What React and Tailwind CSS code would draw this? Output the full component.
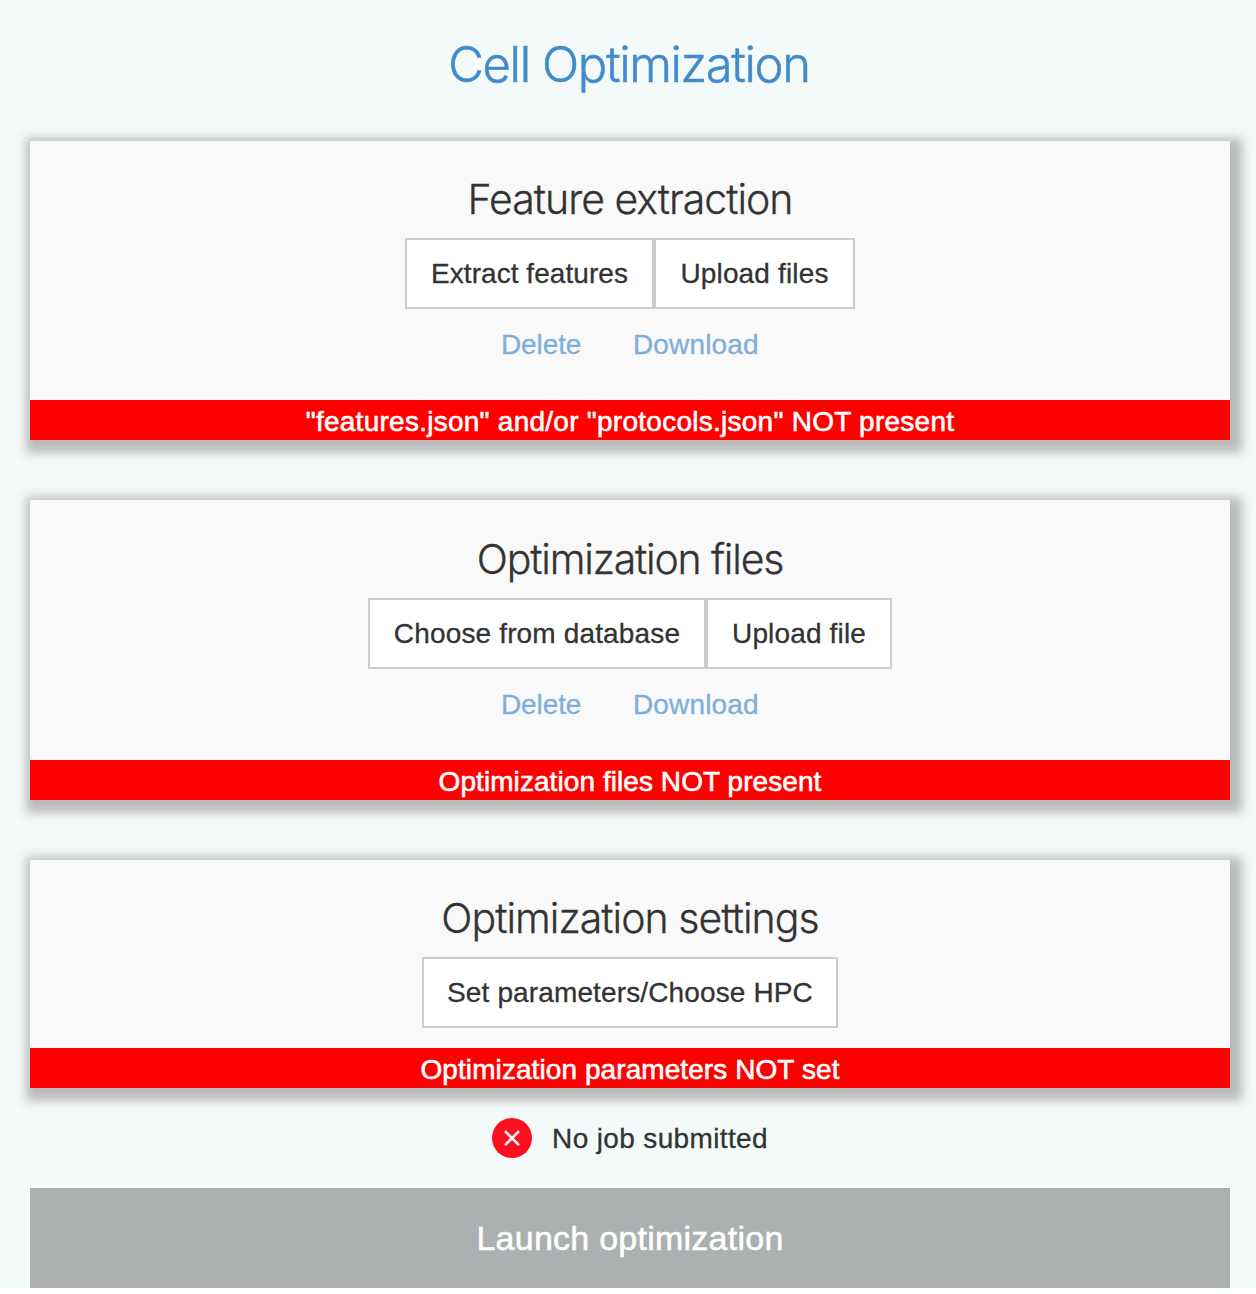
const heading = "text-center font-light whitespace-nowrap font-['Inter','Liberation_Sans',sans-serif]";

function Card({ title, titleClass, className, buttons, links, status, statusClass }) {
  return (
    <section
      className={`flex flex-col items-center bg-[#f9f9f9] shadow-[4px_5px_10px_8px_#bababa] ${className}`}
    >
      <h2 className={`${heading} h-[66px] text-[41px] leading-[54px] text-[#333] ${titleClass}`}>
        {title}
      </h2>
      <div className="flex">
        {buttons.map((b) => (
          <button
            key={b.label}
            className={`h-[71px] border-2 border-[#ccc] bg-white pt-px text-center whitespace-nowrap ${b.className}`}
          >
            {b.label}
          </button>
        ))}
      </div>
      {links && (
        <div className="mt-5 flex h-8 items-center gap-[52px] leading-8 text-[#80aedb]">
          <a className="w-20 tracking-[-0.1px]">Delete</a>
          <a className="w-[126px] tracking-[0.15px]">Download</a>
        </div>
      )}
      <div className={`mt-auto h-10 w-full bg-[#f00] text-center leading-[43px] text-white [-webkit-text-stroke:0.6px_white] ${statusClass}`}>
        {status}
      </div>
    </section>
  );
}

export default function App() {
  return (
    <div className="h-[1294px] bg-white">
      <main className="flex h-[1288px] w-[1256px] flex-col bg-[#f4fafa] pr-[26px] pl-[30px] font-['Liberation_Sans',Arial,sans-serif] text-[28px] text-[#333] [-webkit-text-stroke:0.3px_currentColor]">
        <h1 className={`${heading} h-[141px] pt-8 pr-0.5 text-[49px] leading-[65px] tracking-[-1.4px] text-[#428bca] [-webkit-text-stroke:0.5px_currentColor]`}>
          Cell Optimization
        </h1>
        <Card
          className="h-[299px] pt-[31px]"
          title="Feature extraction"
          titleClass="tracking-[-1px]"
          buttons={[
            { label: "Extract features", className: "w-[249px] tracking-[0.05px]" },
            { label: "Upload files", className: "w-[201px] tracking-[0.15px]" },
          ]}
          links
          status={'"features.json" and/or "protocols.json" NOT present'}
          statusClass="tracking-[0.26px]"
        />
        <Card
          className="mt-[60px] h-[300px] pt-8"
          title="Optimization files"
          titleClass="tracking-[-1.18px]"
          buttons={[
            { label: "Choose from database", className: "w-[338px] tracking-[0.15px]" },
            { label: "Upload file", className: "w-[186px] tracking-[0.15px]" },
          ]}
          links
          status="Optimization files NOT present"
          statusClass="tracking-[0.07px]"
        />
        <Card
          className="mt-[60px] h-[228px] pt-[31px]"
          title="Optimization settings"
          titleClass="tracking-[-0.95px]"
          buttons={[{ label: "Set parameters/Choose HPC", className: "w-[416px] tracking-[0.13px]" }]}
          status="Optimization parameters NOT set"
          statusClass="tracking-[0.08px]"
        />
        <div className="mt-[30px] flex h-10 items-center justify-center gap-5">
          <svg width="40" height="40" viewBox="0 0 40 40">
            <circle cx="20" cy="20" r="20" fill="#ff0e1f" stroke="none" />
            <path d="M13 13.2 27 27.2M27 13.2 13 27.2" stroke="#fff" strokeWidth="2.6" fill="none" />
          </svg>
          <span className="pt-px tracking-[0.36px] whitespace-nowrap">No job submitted</span>
        </div>
        <button className="mt-[30px] h-[100px] w-full bg-[#acb0b0] text-center text-[34px] tracking-[0.25px] text-white [-webkit-text-stroke:0.5px_white]">
          Launch optimization
        </button>
      </main>
    </div>
  );
}
